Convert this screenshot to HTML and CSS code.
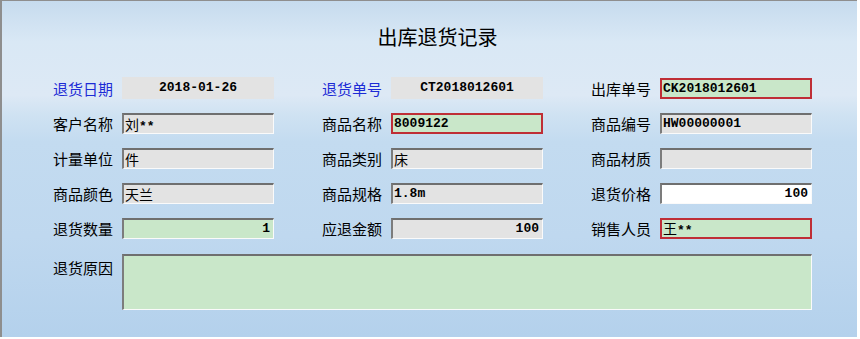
FILE: index.html
```html
<!DOCTYPE html>
<html lang="zh-CN">
<head>
  <meta charset="UTF-8">
  <title>出库退货记录</title>
  <link rel="stylesheet" href="styles.css">
</head>
<body>
  <div class="window">
    <h1 class="title">出库退货记录</h1>

    <div class="form">
      <!-- row 1 -->
      <div class="item">
        <label class="blue">退货日期</label>
        <div class="field flat center">2018-01-26</div>
      </div>
      <div class="item">
        <label class="blue">退货单号</label>
        <div class="field flat center">CT2018012601</div>
      </div>
      <div class="item">
        <label>出库单号</label>
        <div class="field required">CK2018012601</div>
      </div>

      <!-- row 2 -->
      <div class="item">
        <label>客户名称</label>
        <div class="field sunken"><span class="cn">刘</span>**</div>
      </div>
      <div class="item">
        <label>商品名称</label>
        <div class="field required">8009122</div>
      </div>
      <div class="item">
        <label>商品编号</label>
        <div class="field sunken">HW00000001</div>
      </div>

      <!-- row 3 -->
      <div class="item">
        <label>计量单位</label>
        <div class="field sunken"><span class="cn">件</span></div>
      </div>
      <div class="item">
        <label>商品类别</label>
        <div class="field sunken"><span class="cn">床</span></div>
      </div>
      <div class="item">
        <label>商品材质</label>
        <div class="field sunken"></div>
      </div>

      <!-- row 4 -->
      <div class="item">
        <label>商品颜色</label>
        <div class="field sunken"><span class="cn">天兰</span></div>
      </div>
      <div class="item">
        <label>商品规格</label>
        <div class="field sunken">1.8m</div>
      </div>
      <div class="item">
        <label>退货价格</label>
        <div class="field sunken white right">100</div>
      </div>

      <!-- row 5 -->
      <div class="item">
        <label>退货数量</label>
        <div class="field sunken green right">1</div>
      </div>
      <div class="item">
        <label>应退金额</label>
        <div class="field sunken right">100</div>
      </div>
      <div class="item">
        <label>销售人员</label>
        <div class="field required"><span class="cn">王</span>**</div>
      </div>

      <!-- reason -->
      <div class="item wide">
        <label>退货原因</label>
        <div class="field sunken green memo"></div>
      </div>
    </div>
  </div>
</body>
</html>
```

FILE: styles.css
```css
body {
  margin: 0;
  background: #fff;
  font-family: "Noto Sans CJK SC", "Liberation Sans", sans-serif;
  color: #000;
}

.window {
  width: 857px;
  height: 337px;
  box-sizing: border-box;
  border-top: 1px solid #8e8e8e;
  border-left: 2px solid #8e8e8e;
  background: linear-gradient(180deg, #c6dbee 0%, #d9e8f5 12%, #dde9f5 28%, #cfe2f2 34%, #c3dbf0 42%, #bfd8ef 70%, #b4d1ec 100%);
}

.title {
  margin: 0;
  padding: 24px 0 0 16px;
  font-size: 20px;
  line-height: 24px;
  font-weight: normal;
  text-align: center;
}

.form {
  display: grid;
  grid-template-columns: repeat(3, 222px);
  column-gap: 47px;
  row-gap: 14px;
  margin-top: 28px;
  padding-left: 50px;
}

.item {
  display: flex;
  align-items: center;
}

.item label {
  width: 70px;
  padding-right: 9px;
  box-sizing: border-box;
  text-align: right;
  font-size: 15px;
  line-height: 21px;
  white-space: nowrap;
}

.item label.blue {
  color: #1c2bd6;
}

.field {
  width: 152px;
  height: 21px;
  box-sizing: border-box;
  padding: 0 3px;
  background: #e3e3e3;
  font-family: "Liberation Mono", "Noto Sans CJK SC", monospace;
  font-size: 13px;
  font-weight: bold;
  line-height: 18px;
  white-space: nowrap;
  overflow: hidden;
}

.field .cn {
  font-family: "Noto Sans CJK SC", sans-serif;
  font-weight: normal;
  font-size: 14px;
}

.field.flat {
  height: 22px;
  line-height: 21px;
}

.field.center {
  text-align: center;
}

.field.right {
  text-align: right;
}

.field.sunken {
  border-top: 2px solid #6f6f6f;
  border-left: 2px solid #7c7c7c;
  border-right: 1px solid #fafafa;
  border-bottom: 1px solid #fafafa;
  padding-left: 1px;
}

.field.sunken.right {
  padding-right: 3px;
}

.field.required {
  background: #c9e7c9;
  border: 2px solid #bf2e36;
  padding-left: 1px;
  line-height: 17px;
}

.field.white {
  background: #fff;
}

.field.green {
  background: #c9e7c9;
}

.item.wide {
  grid-column: 1 / -1;
  align-items: flex-start;
  margin-top: 1px;
}

.item.wide label {
  margin-top: 3px;
}

.field.memo {
  flex: 1;
  height: 56px;
}
```
